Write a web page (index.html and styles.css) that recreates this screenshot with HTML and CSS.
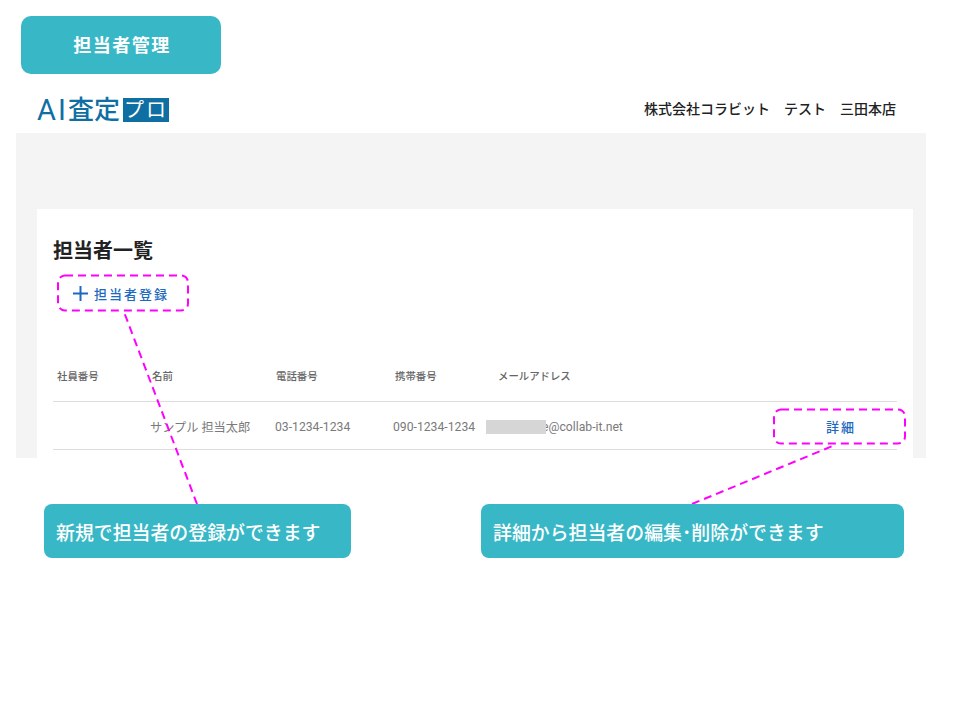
FILE: index.html
```html
<!DOCTYPE html>
<html lang="ja">
<head>
    <meta charset="UTF-8">
    <meta name="viewport" content="width=device-width, initial-scale=1.0">
    <title>担当者管理</title>
    <link rel="stylesheet" href="styles.css">
</head>
<body>
    <div class="page">
        <div class="page-badge">担当者管理</div>

        <div class="topbar">
            <div class="logo">
                <span class="logo-ai">AI</span>
                <span class="logo-text">査定</span>
                <span class="logo-box">プロ</span>
            </div>
            <div class="company">株式会社コラビット　テスト　三田本店</div>
        </div>

        <div class="panel">
            <div class="card">
                <h1 class="card-title">担当者一覧</h1>
                <a href="#" class="add-link">
                    <svg class="plus" width="15" height="15" viewBox="0 0 15 15"><path d="M7.5 0V15M0 7.5H15" stroke="#1d69c0" stroke-width="2" fill="none"/></svg>
                    担当者登録
                </a>

                <div class="row row-head">
                    <div class="col-id">社員番号</div>
                    <div class="col-name">名前</div>
                    <div class="col-tel">電話番号</div>
                    <div class="col-mobile">携帯番号</div>
                    <div class="col-mail">メールアドレス</div>
                </div>
                <div class="row row-body">
                    <div class="col-id"></div>
                    <div class="col-name">サンプル 担当太郎</div>
                    <div class="col-tel">03-1234-1234</div>
                    <div class="col-mobile">090-1234-1234</div>
                    <div class="col-mail"><span class="masked"></span>e@collab-it.net</div>
                    <a href="#" class="detail-link">詳細</a>
                </div>
            </div>
        </div>

        <!-- annotations drawn over the screenshot -->
        <svg class="marks" width="960" height="720" viewBox="0 0 960 720">
            <g fill="none" stroke="#ff00ff" stroke-width="2" stroke-dasharray="8 5">
                <rect x="58" y="275.5" width="130" height="35" rx="7"/>
                <rect x="774" y="409.5" width="131" height="34" rx="7"/>
                <path d="M197 504L124 312"/>
                <path d="M692 504L835 445"/>
            </g>
        </svg>
        <div class="note note-left">新規で担当者の登録ができます</div>
        <div class="note note-right">詳細から担当者の編集･削除ができます</div>
    </div>
</body>
</html>
```

FILE: styles.css
```css
body {
    margin: 0;
    background: #fff;
    color: #222;
    font-family: Roboto, "Noto Sans CJK JP", sans-serif;
}
.page {
    position: relative;
    width: 960px;
    height: 720px;
    overflow: hidden;
    padding-top: 16px;
    box-sizing: border-box;
}
.page-badge {
    width: 200px;
    height: 58px;
    margin-left: 21px;
    padding: 0 0 3px 2px;
    box-sizing: border-box;
    display: flex;
    align-items: center;
    justify-content: center;
    background: #38b8c7;
    border-radius: 10px;
    color: #fff;
    font-size: 18px;
    font-weight: bold;
    letter-spacing: 1.5px;
}
.topbar {
    width: 910px;
    height: 59px;
    margin-left: 16px;
    padding: 0 30px 0 21px;
    box-sizing: border-box;
    display: flex;
    align-items: center;
    justify-content: space-between;
}
.logo {
    display: flex;
    align-items: center;
    color: #0f6fa3;
    margin-top: 12px;
    height: 24px;
}
.logo-ai {
    width: 31px;
    font-size: 29px;
    line-height: 24px;
    font-weight: 400;
    letter-spacing: 2px;
    white-space: nowrap;
}
.logo-text {
    width: 55px;
    font-size: 26px;
    line-height: 24px;
    font-weight: 500;
    white-space: nowrap;
}
.logo-box {
    width: 46px;
    height: 24px;
    background: #0f6fa3;
    color: #fff;
    font-size: 20px;
    line-height: 24px;
    text-align: center;
    letter-spacing: 2px;
}
.company {
    font-size: 14px;
    font-weight: 500;
    margin-top: 9px;
    white-space: nowrap;
}
.panel {
    width: 910px;
    height: 325px;
    margin-left: 16px;
    padding: 76px 13px 0 21px;
    box-sizing: border-box;
    background: #f4f4f4;
}
.card {
    height: 249px;
    padding: 29px 16px 0;
    box-sizing: border-box;
    background: #fff;
}
.card-title {
    margin: 0;
    font-size: 20px;
    line-height: 26px;
    font-weight: bold;
    color: #222;
}
.add-link {
    display: flex;
    align-items: center;
    gap: 6px;
    margin: 19px 0 0 20px;
    height: 20px;
    color: #1d69c0;
    font-size: 13px;
    font-weight: 500;
    letter-spacing: 2px;
    text-decoration: none;
}
.plus {
    flex: none;
}
.row {
    display: flex;
    position: relative;
    width: 844px;
    box-sizing: border-box;
    border-bottom: 1px solid #ddd;
    align-items: center;
}
.row-head {
    height: 48px;
    margin-top: 51px;
    padding-bottom: 4px;
    font-size: 10.4px;
    font-weight: 500;
    color: #666;
}
.row-head .col-id { width: 99px; padding-left: 4px; box-sizing: border-box; }
.row-head .col-name { width: 124px; }
.row-head .col-tel { width: 119px; }
.row-head .col-mobile { width: 103px; }
.row-body {
    height: 48px;
    padding-top: 2px;
    font-size: 12.2px;
    color: #7a7a7a;
}
.row-body .col-id { width: 97px; }
.row-body .col-name { width: 125px; }
.row-body .col-tel { width: 118px; }
.row-body .col-mobile { width: 93px; }
.col-mail {
    display: flex;
    align-items: center;
}
.masked {
    display: inline-block;
    position: relative;
    width: 60px;
    height: 14px;
    margin-right: -4px;
    background: #d6d6d6;
}
.detail-link {
    position: absolute;
    right: 41px;
    top: 15px;
    color: #1d69c0;
    font-size: 13px;
    font-weight: 500;
    letter-spacing: 2px;
    text-decoration: none;
}
.marks {
    position: absolute;
    left: 0;
    top: 0;
    pointer-events: none;
}
.note {
    position: absolute;
    top: 504px;
    height: 54px;
    display: flex;
    align-items: center;
    padding-left: 12px;
    box-sizing: border-box;
    background: #38b8c7;
    border-radius: 8px;
    color: #fff;
    font-size: 18.9px;
    font-weight: 500;
    white-space: nowrap;
}
.note-left {
    left: 44px;
    width: 307px;
}
.note-right {
    left: 481px;
    width: 423px;
}
```
